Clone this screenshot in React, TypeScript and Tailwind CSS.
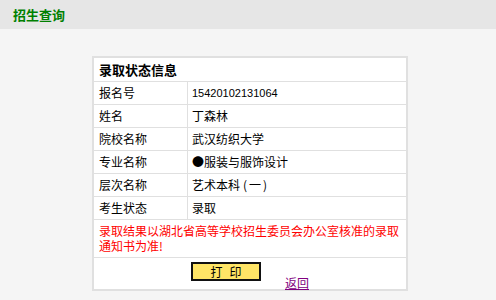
const rows = [
  { label: "报名号", value: "15420102131064", mono: true },
  { label: "姓名", value: "丁森林" },
  { label: "院校名称", value: "武汉纺织大学" },
  { label: "专业名称", value: "●服装与服饰设计" },
  { label: "层次名称", value: "艺术本科(一)", paren: true },
  { label: "考生状态", value: "录取" },
];

export default function App() {
  return (
    <div
      className="min-h-[300px] w-[496px] bg-[#f5f5f5] text-black"
      style={{ fontFamily: '"Noto Sans CJK SC", "Liberation Sans", sans-serif' }}
    >
      <div className="flex h-[29px] items-center bg-[#e6e6e6] pl-[13px]">
        <span className="text-[13px] font-bold leading-none text-[#008000]">招生查询</span>
      </div>

      <div className="ml-[92px] mt-[27px] w-[316px] border-2 border-[#e0e0e0] bg-white">
        <div className="flex h-[24px] items-center border-b border-[#e0e0e0] pl-[5px] text-[13px] font-bold">
          录取状态信息
        </div>

        {rows.map((row) => (
          <div
            key={row.label}
            className="grid h-[23px] grid-cols-[94px_1fr] border-b border-[#e0e0e0] text-[12px]"
          >
            <div className="flex items-center border-r border-[#e0e0e0] pl-[5px]">{row.label}</div>
            <div className="flex items-center pl-[4px]">
              {row.mono ? (
                <span className="text-[11px]" style={{ fontFamily: '"Liberation Sans", sans-serif' }}>
                  {row.value}
                </span>
              ) : row.paren ? (
                <span>
                  艺术本科<span className="ml-[3px]">(</span>
                  <span className="mx-[2px]">一</span>)
                </span>
              ) : (
                row.value
              )}
            </div>
          </div>
        ))}

        <div className="border-b border-[#e0e0e0] pl-[5px] pr-[4px] pt-[3px] pb-[4px] text-[12px] leading-[15px] text-[#ff0000]">
          录取结果以湖北省高等学校招生委员会办公室核准的录取通知书为准!
        </div>

        <div className="flex h-[31px] items-start justify-center gap-[24px] pt-[4px]">
          <button className="flex h-[19px] w-[70px] items-center justify-center gap-[7px] border-2 border-[#111] bg-[#ffe566] text-[12px] leading-none">
            <span>打</span>
            <span>印</span>
          </button>
          <a href="#" className="mt-[14px] text-[12px] leading-[14px] text-[#800080] underline">
            返回
          </a>
        </div>
      </div>
    </div>
  );
}
